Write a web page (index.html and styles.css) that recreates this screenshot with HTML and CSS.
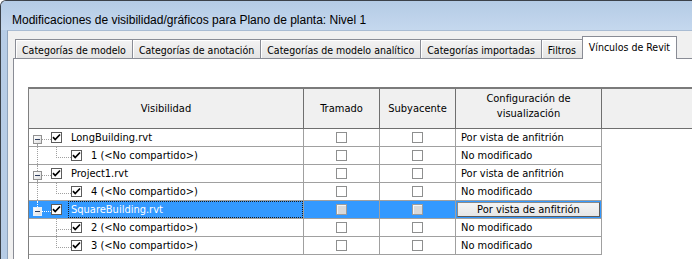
FILE: index.html
```html
<!DOCTYPE html>
<html lang="es">
<head>
    <meta charset="UTF-8">
    <meta name="viewport" content="width=device-width, initial-scale=1.0">
    <title>Modificaciones de visibilidad/gráficos</title>
    <link rel="stylesheet" href="styles.css">
</head>
<body>
    <div class="window">
        <div class="titlebar">Modificaciones de visibilidad/gráficos para Plano de planta: Nivel 1</div>
        <div class="frame">
            <div class="dialog">
                <div class="tabs">
                    <div class="tab">Categorías de modelo</div>
                    <div class="tab">Categorías de anotación</div>
                    <div class="tab">Categorías de modelo analítico</div>
                    <div class="tab">Categorías importadas</div>
                    <div class="tab">Filtros</div>
                    <div class="tab active">Vínculos de Revit</div>
                </div>
                <div class="panel">
                    <div class="grid">
                        <div class="row head-row">
                            <div class="cell">Visibilidad</div>
                            <div class="cell">Tramado</div>
                            <div class="cell">Subyacente</div>
                            <div class="cell two-lines">Configuración de<br>visualización</div>
                            <div class="cell"></div>
                        </div>

                        <div class="row body-row">
                            <div class="cell tree">
                                <span class="node start"><span class="seg"></span><span class="box"></span><span class="seg"></span></span>
                                <span class="link"></span>
                                <span class="cb"><svg viewBox="0 0 9 9"><path d="M1 4.2 3.2 6.5 8 1.5"/></svg></span>
                                <span class="label">LongBuilding.rvt</span>
                            </div>
                            <div class="cell chk"><span class="cb"></span></div>
                            <div class="cell chk"><span class="cb"></span></div>
                            <div class="cell mode">Por vista de anfitrión</div>
                            <div class="cell filler"></div>
                        </div>

                        <div class="row body-row">
                            <div class="cell tree">
                                <span class="trunk line"></span>
                                <span class="elbow"><span class="seg"></span><span class="seg"></span></span>
                                <span class="cb"><svg viewBox="0 0 9 9"><path d="M1 4.2 3.2 6.5 8 1.5"/></svg></span>
                                <span class="label">1 (&lt;No compartido&gt;)</span>
                            </div>
                            <div class="cell chk"><span class="cb"></span></div>
                            <div class="cell chk"><span class="cb"></span></div>
                            <div class="cell mode">No modificado</div>
                            <div class="cell filler"></div>
                        </div>

                        <div class="row body-row">
                            <div class="cell tree">
                                <span class="node start end"><span class="seg"></span><span class="box"></span><span class="seg"></span></span>
                                <span class="link"></span>
                                <span class="cb"><svg viewBox="0 0 9 9"><path d="M1 4.2 3.2 6.5 8 1.5"/></svg></span>
                                <span class="label">Project1.rvt</span>
                            </div>
                            <div class="cell chk"><span class="cb"></span></div>
                            <div class="cell chk"><span class="cb"></span></div>
                            <div class="cell mode">Por vista de anfitrión</div>
                            <div class="cell filler"></div>
                        </div>

                        <div class="row body-row">
                            <div class="cell tree">
                                <span class="trunk line"></span>
                                <span class="elbow"><span class="seg"></span><span class="seg"></span></span>
                                <span class="cb"><svg viewBox="0 0 9 9"><path d="M1 4.2 3.2 6.5 8 1.5"/></svg></span>
                                <span class="label">4 (&lt;No compartido&gt;)</span>
                            </div>
                            <div class="cell chk"><span class="cb"></span></div>
                            <div class="cell chk"><span class="cb"></span></div>
                            <div class="cell mode">No modificado</div>
                            <div class="cell filler"></div>
                        </div>

                        <div class="row body-row selected">
                            <div class="cell tree">
                                <span class="node end"><span class="seg"></span><span class="box"></span><span class="seg"></span></span>
                                <span class="link"></span>
                                <span class="cb"><svg viewBox="0 0 9 9"><path d="M1 4.2 3.2 6.5 8 1.5"/></svg></span>
                                <span class="label focus">SquareBuilding.rvt</span>
                            </div>
                            <div class="cell chk"><span class="cb disabled"></span></div>
                            <div class="cell chk"><span class="cb disabled"></span></div>
                            <div class="cell mode"><button type="button" class="mode-button">Por vista de anfitrión</button></div>
                            <div class="cell filler"></div>
                        </div>

                        <div class="row body-row">
                            <div class="cell tree">
                                <span class="trunk"></span>
                                <span class="elbow more"><span class="seg"></span><span class="seg"></span></span>
                                <span class="cb"><svg viewBox="0 0 9 9"><path d="M1 4.2 3.2 6.5 8 1.5"/></svg></span>
                                <span class="label">2 (&lt;No compartido&gt;)</span>
                            </div>
                            <div class="cell chk"><span class="cb"></span></div>
                            <div class="cell chk"><span class="cb"></span></div>
                            <div class="cell mode">No modificado</div>
                            <div class="cell filler"></div>
                        </div>

                        <div class="row body-row">
                            <div class="cell tree">
                                <span class="trunk"></span>
                                <span class="elbow"><span class="seg"></span><span class="seg"></span></span>
                                <span class="cb"><svg viewBox="0 0 9 9"><path d="M1 4.2 3.2 6.5 8 1.5"/></svg></span>
                                <span class="label">3 (&lt;No compartido&gt;)</span>
                            </div>
                            <div class="cell chk"><span class="cb"></span></div>
                            <div class="cell chk"><span class="cb"></span></div>
                            <div class="cell mode">No modificado</div>
                            <div class="cell filler"></div>
                        </div>
                    </div>
                </div>
            </div>
        </div>
    </div>
</body>
</html>
```

FILE: styles.css
```css
* {
    box-sizing: border-box;
}

html,
body {
    margin: 0;
    height: 259px;
    overflow: hidden;
    background-color: #fff;
}

body {
    font-family: "DejaVu Sans Condensed", "Liberation Sans", sans-serif;
    font-size: 11px;
    color: #000;
}

.window {
    width: 760px;
    border-top: 1px solid #3b4149;
    border-left: 1px solid #3b4149;
    border-top-left-radius: 6px;
    background-color: #bfd3ea;
    overflow: hidden;
}

.titlebar {
    height: 29px;
    padding: 11px 0 0 11px;
    line-height: 16px;
    font-family: "Liberation Sans", sans-serif;
    font-size: 12px;
    background: linear-gradient(#b4cbe5, #c5d8ee);
}

.frame {
    padding-left: 6px;
    background: linear-gradient(90deg, #b6cce6, #d3e3f4 50%, #bcd1e9);
}

.dialog {
    background-color: #f0f0f0;
    border-top: 1px solid #a9bcd3;
    border-left: 1px solid #8fa4bd;
    padding: 5px 0 0 5px;
}

/* tabs */
.tabs {
    display: flex;
    align-items: flex-end;
    padding-left: 2px;
    font-size: 10.5px;
}

.tab {
    height: 19px;
    padding: 1px 6px 0;
    margin-right: -1px;
    line-height: 18px;
    white-space: nowrap;
    border: 1px solid #898c95;
    border-bottom: none;
    background: linear-gradient(#f3f3f3, #e4e4e4);
    box-shadow: inset 1px 1px 0 #fff;
}

.tab.active {
    position: relative;
    height: 23px;
    margin-bottom: -1px;
    padding: 1px 6px 2px;
    line-height: 18px;
    background: #fff;
    box-shadow: none;
}

.panel {
    background-color: #fff;
    border-top: 1px solid #898c95;
    border-left: 1px solid #898c95;
    padding: 28px 0 0 14px;
}

/* grid */
.grid {
    height: 220px;
    border-left: 1px solid #7f7f7f;
}

.row {
    display: grid;
    grid-template-columns: 275px 76px 76px 146px 1fr;
}

.head-row {
    background-color: #f0f0f0;
    border-top: 2px solid #7b7b7b;
}

.head-row .cell {
    height: 40px;
    display: flex;
    align-items: center;
    justify-content: center;
    text-align: center;
    border-right: 1px solid #6f6f6f;
    border-bottom: 1px solid #6f6f6f;
}

.head-row .cell:last-child {
    border-right: none;
}

.head-row .two-lines {
    line-height: 15px;
    padding-bottom: 6px;
}

.body-row .cell {
    height: 18px;
    display: flex;
    align-items: center;
    white-space: nowrap;
    border-right: 1px solid #a0a0a0;
    border-bottom: 1px solid #a0a0a0;
}

.body-row .filler {
    border: none;
}

.selected .cell {
    background-color: #3399ff;
    color: #fff;
}

.selected .filler {
    background-color: #fff;
}

.chk {
    justify-content: center;
}

.mode {
    padding-left: 5px;
}

.selected .mode {
    padding: 0 1px 1px 1px;
}

.mode-button {
    width: 100%;
    height: 15px;
    padding: 0;
    font: inherit;
    color: #000;
    border: 1px solid #8a8a8a;
    border-right-color: #5a5a5a;
    border-bottom-color: #5a5a5a;
    background: linear-gradient(#f4f4f4, #e6e6e6);
}

/* checkboxes */
.cb {
    width: 11px;
    height: 11px;
    flex: none;
    display: inline-flex;
    border: 1px solid #8e8f8f;
    background-color: #fff;
}

.tree .cb {
    border-color: #5c5c5c;
}

.cb svg {
    width: 9px;
    height: 9px;
    fill: none;
    stroke: #000;
    stroke-width: 1.7;
}

.cb.disabled {
    background-color: #d9d9d9;
    border-color: #9c9c9c;
    box-shadow: inset 1px 1px 0 #f4f4f4;
}

/* tree lines */
.tree {
    color: #000;
}

.node {
    width: 9px;
    margin-left: 4px;
    flex: none;
    align-self: stretch;
    display: flex;
    flex-direction: column;
}

.node .seg {
    margin-left: 4px;
    border-left: 1px dotted transparent;
}

.node .seg:first-child {
    height: 6px;
}

.node .seg:last-child {
    flex: 1;
}

.node.start .seg:last-child,
.node.end .seg:first-child {
    border-left-color: #a0a0a0;
}

.box {
    width: 9px;
    height: 9px;
    display: flex;
    align-items: center;
    justify-content: center;
    border: 1px solid #919191;
    background: linear-gradient(135deg, #fff, #dedede);
}

.box::before {
    content: "";
    width: 5px;
    height: 1px;
    background-color: #2d3d5f;
}

.link {
    width: 9px;
    flex: none;
    align-self: flex-start;
    margin-top: 10px;
    border-top: 1px dotted #a0a0a0;
}

.trunk {
    width: 19px;
    margin-left: 8px;
    flex: none;
    align-self: stretch;
    border-left: 1px dotted transparent;
}

.trunk.line {
    border-left-color: #a0a0a0;
}

.elbow {
    width: 15px;
    flex: none;
    align-self: stretch;
    display: flex;
    flex-direction: column;
}

.elbow .seg:first-child {
    height: 11px;
    border-left: 1px dotted #a0a0a0;
    border-bottom: 1px dotted #a0a0a0;
}

.elbow .seg:last-child {
    flex: 1;
    border-left: 1px dotted transparent;
}

.elbow.more .seg:last-child {
    border-left-color: #a0a0a0;
}

.label {
    flex: 1;
    align-self: stretch;
    display: flex;
    align-items: center;
    margin-left: 6px;
    padding-left: 2px;
    border: 1px dotted transparent;
}

.selected .tree {
    color: #fff;
}

.selected .node.end .seg:first-child,
.selected .link {
    border-color: #fff;
}

.selected .box {
    border-color: #e8f1fb;
}

.label.focus {
    border-color: #1a1a1a;
}
```
